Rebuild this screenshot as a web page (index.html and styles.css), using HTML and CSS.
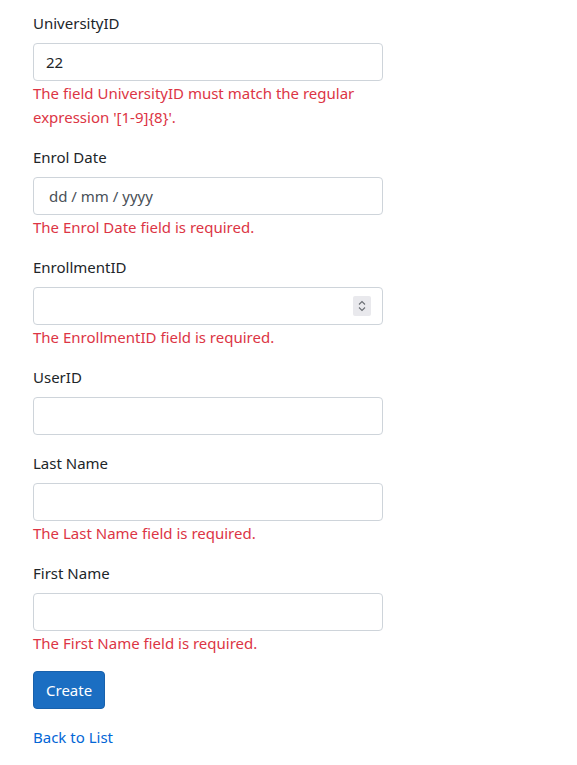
FILE: index.html
```html
<!DOCTYPE html>
<html lang="en">
<head>
<meta charset="utf-8">
<title>Create</title>
<link rel="stylesheet" href="styles.css">
</head>
<body>
<form class="form">
  <div class="group">
    <label class="label">UniversityID</label>
    <input class="control" type="text" value="22">
    <span class="error">The field UniversityID must match the regular expression '[1-9]{8}'.</span>
  </div>
  <div class="group">
    <label class="label">Enrol Date</label>
    <input class="control date" type="text" value="dd / mm / yyyy">
    <span class="error">The Enrol Date field is required.</span>
  </div>
  <div class="group">
    <label class="label">EnrollmentID</label>
    <div class="field">
      <input class="control" type="text" value="">
      <span class="spin">
        <svg width="10" height="14" viewBox="0 0 10 14"><path d="M2 5.5 L5 2.5 L8 5.5 M2 8.5 L5 11.5 L8 8.5" fill="none" stroke="#6b6f74" stroke-width="1.1"/></svg>
      </span>
    </div>
    <span class="error">The EnrollmentID field is required.</span>
  </div>
  <div class="group">
    <label class="label">UserID</label>
    <input class="control" type="text" value="">
  </div>
  <div class="group">
    <label class="label">Last Name</label>
    <input class="control" type="text" value="">
    <span class="error">The Last Name field is required.</span>
  </div>
  <div class="group">
    <label class="label">First Name</label>
    <input class="control" type="text" value="">
    <span class="error">The First Name field is required.</span>
  </div>
  <div class="group">
    <button class="btn" type="button">Create</button>
  </div>
  <div class="links">
    <a class="link" href="#">Back to List</a>
  </div>
</form>
</body>
</html>
```
FILE: styles.css
```css
html, body {
  margin: 0;
  padding: 0;
  background: #fff;
}
body {
  font-family: "Noto Sans", "Open Sans", sans-serif;
  font-size: 15px;
  line-height: 24px;
  color: #212529;
}
.form {
  width: 350px;
  padding: 11px 0 0 33px;
}
.group {
  display: flex;
  flex-direction: column;
  margin-bottom: 16px;
}
.label {
  display: block;
  margin-bottom: 8px;
}
.field {
  position: relative;
}
.control {
  box-sizing: border-box;
  display: block;
  width: 350px;
  height: 38px;
  padding: 6px 12px;
  font: inherit;
  color: #212529;
  background: #fff;
  border: 1px solid #ced4da;
  border-radius: 4px;
  outline: none;
}
.date {
  padding-left: 15px;
  color: #495057;
}
.spin {
  position: absolute;
  right: 12px;
  top: 9px;
  width: 18px;
  height: 20px;
  background: #e9e9ed;
  border-radius: 2px;
  display: flex;
  align-items: center;
  justify-content: center;
}
.error {
  color: #dc3545;
}
.btn {
  align-self: flex-start;
  height: 38px;
  padding: 6px 12px;
  font: inherit;
  color: #fff;
  background: #1b6ec2;
  border: 1px solid #1861ac;
  border-radius: 4px;
}
.link {
  color: #0366d6;
  text-decoration: none;
}
```
